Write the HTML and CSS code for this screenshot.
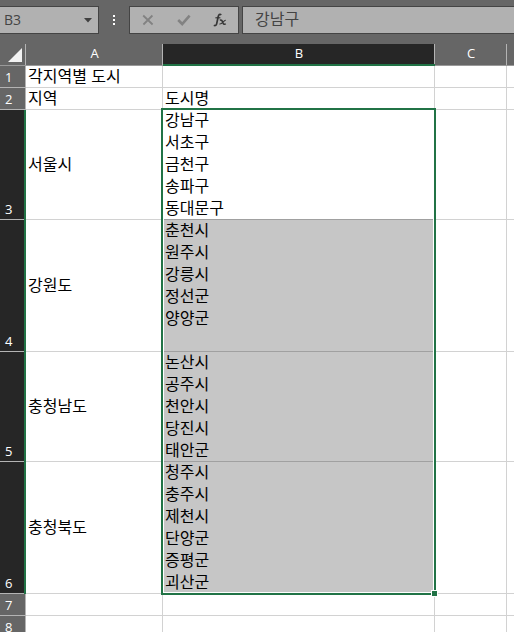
FILE: index.html
```html
<!DOCTYPE html>
<html lang="ko">
<head>
<meta charset="utf-8">
<title>각지역별 도시</title>
<link rel="stylesheet" href="styles.css">
</head>
<body>
<header class="formula-bar">
  <div class="name-box">
    <input class="field" type="text" value="B3" aria-label="이름 상자">
    <button class="tool drop" type="button" aria-label="이름 목록">
      <svg width="8" height="5" viewBox="0 0 8 5"><path d="M0 0h8L4 4.5z" fill="#404040"/></svg>
    </button>
  </div>
  <svg class="grip" width="2" height="10" viewBox="0 0 2 10"><path d="M0 0h2v2H0zM0 4h2v2H0zM0 8h2v2H0z" fill="#fff"/></svg>
  <div class="tools">
    <button class="tool" type="button" aria-label="취소">
      <svg width="12" height="12" viewBox="0 0 12 12"><path d="M1.2 1.5l9.4 9M10.4 1.5L1.4 10.5" fill="none" stroke="#828282" stroke-width="1.8"/></svg>
    </button>
    <button class="tool" type="button" aria-label="입력">
      <svg width="14" height="12" viewBox="0 0 14 12"><path d="M1.2 6l4 4L12.6 1.6" fill="none" stroke="#828282" stroke-width="2.6"/></svg>
    </button>
    <button class="tool" type="button" aria-label="함수 삽입">
      <svg width="14" height="14" viewBox="0 0 14 14" fill="none" stroke="#363636">
        <path d="M8.3 1.8C6.8.6 5.6 1.6 5.1 4L3.7 10.6C3.3 12.4 2.3 13 .8 12.3" stroke-width="1.7"/>
        <path d="M2.4 4.8h5" stroke-width="1.2"/>
        <path d="M6.8 7.2C8.9 6.4 9.2 8 9.7 9.4S10.9 11.8 12.8 10.8" stroke-width="1.5"/>
        <path d="M12.8 7.2C10.6 6.8 9.5 11.7 6.4 11" stroke-width="1.1"/>
      </svg>
    </button>
  </div>
  <input class="field formula" type="text" value="강남구" aria-label="수식 입력줄">
</header>
<main class="sheet">
  <table class="grid">
    <colgroup><col class="col-head"><col class="col-a"><col class="col-b"><col class="col-c"><col></colgroup>
    <thead>
      <tr>
        <th class="corner"><svg width="14" height="14" viewBox="0 0 14 14"><path d="M14 0v14H0z" fill="#f2f2f2"/></svg></th>
        <th scope="col">A</th><th scope="col" class="active">B</th><th scope="col">C</th><th></th>
      </tr>
    </thead>
    <tbody>
      <tr><th scope="row">1</th><td>각지역별 도시</td><td></td><td></td><td></td></tr>
      <tr><th scope="row">2</th><td>지역</td><td>도시명</td><td></td><td></td></tr>
      <tr><th scope="row" class="active">3</th><td>서울시</td><td class="anchor">강남구<br>서초구<br>금천구<br>송파구<br>동대문구<div class="selection"></div></td><td></td><td></td></tr>
      <tr><th scope="row" class="active">4</th><td>강원도</td><td class="selected">춘천시<br>원주시<br>강릉시<br>정선군<br>양양군<br>&nbsp;</td><td></td><td></td></tr>
      <tr><th scope="row" class="active">5</th><td>충청남도</td><td class="selected">논산시<br>공주시<br>천안시<br>당진시<br>태안군</td><td></td><td></td></tr>
      <tr><th scope="row" class="active">6</th><td>충청북도</td><td class="selected">청주시<br>충주시<br>제천시<br>단양군<br>증평군<br>괴산군</td><td></td><td></td></tr>
      <tr><th scope="row">7</th><td></td><td></td><td></td><td></td></tr>
      <tr><th scope="row">8</th><td></td><td></td><td></td><td></td></tr>
    </tbody>
  </table>
</main>
</body>
</html>
```
FILE: styles.css
```css
*,
*::after {
  box-sizing: border-box;
}

body {
  display: flex;
  flex-direction: column;
  height: 100vh;
  margin: 0;
  overflow: hidden;
  background: #666;
  color: #000;
  font: 16px/22px "Liberation Sans", "Noto Sans CJK KR", sans-serif;
}

/* Formula bar */
.formula-bar {
  display: flex;
  flex: none;
  align-items: center;
  padding: 6px 0 10px;
}

.name-box,
.tools,
.formula {
  height: 28px;
  border: 1px solid #444;
  background: #b1b1b1;
}

.name-box {
  display: flex;
  flex: none;
  width: 99px;
  border-left: 0;
}

.field {
  min-width: 0;
  margin: 0;
  padding: 0 4px;
  border: 0;
  border-radius: 0;
  outline: 0;
  background: transparent;
  color: #444;
  font: 14px/22px "Open Sans", "Noto Sans CJK KR", sans-serif;
}

.name-box .field {
  flex: 1;
}

.field.formula {
  flex: 1;
  margin-left: 3px;
  padding: 0 12px 4px;
  border: 1px solid #444;
  border-right: 0;
  background: #b1b1b1;
  font: 16px/22px "Liberation Sans", "Noto Sans CJK KR", sans-serif;
}

.tool {
  display: flex;
  flex: 1;
  align-items: center;
  justify-content: center;
  padding: 0;
  border: 0;
  background: transparent;
}

.tool.drop {
  flex: none;
  width: 20px;
}

.grip {
  flex: none;
  margin: 0 14px;
}

.tools {
  display: flex;
  flex: none;
  width: 110px;
}

/* Sheet */
.sheet {
  flex: 1;
  min-height: 0;
  overflow: hidden;
  background: #fff;
}

.grid {
  width: 100%;
  table-layout: fixed;
  border-spacing: 0;
}

.col-head { width: 26px; }
.col-a { width: 137px; }
.col-b { width: 272px; }
.col-c { width: 72px; }

/* Grid lines are inset shadows, so a row is a whole number of text lines */
th,
td {
  height: 22px;
  padding: 0 2px;
  box-shadow: inset -1px -1px #d2d2d2;
  text-align: left;
  white-space: nowrap;
}

th {
  background: #666;
  box-shadow: inset -1px -1px #b4b4b4;
  color: #fff;
  font: 13px/18px "Open Sans", sans-serif;
}

thead th {
  padding: 0 0 4px;
  box-shadow: inset 0 -1px #999, inset -1px 0 #b4b4b4;
  text-align: center;
}

tbody th {
  padding: 0 0 2px 5px;
  vertical-align: bottom;
}

th.active {
  background: #262626;
}

thead th.active {
  box-shadow: inset 0 -2px #217346, inset -1px 0 #b4b4b4;
}

tbody th.active {
  box-shadow: inset -2px 0 #217346, inset 0 -1px #b4b4b4;
}

/* The last column runs on past the window edge */
thead th:last-child {
  box-shadow: inset 0 -1px #999;
}

td:last-child {
  box-shadow: inset 0 -1px #d2d2d2;
}

thead .corner {
  padding: 0;
}

.corner svg {
  display: block;
  margin: 4px 4px 4px auto;
}

td.selected {
  background: #c6c6c6;
}

td.anchor,
td.selected {
  box-shadow: inset -1px -1px #a0a0a0;
}

td.anchor {
  position: relative;
}

/* Outline around rows 3 to 6 of column B */
.selection {
  position: absolute;
  top: -2px;
  left: -2px;
  width: 275px;
  height: 487px;
  border: 2px solid #217346;
  box-shadow: inset 0 0 0 1px #fff;
}

.selection::after {
  position: absolute;
  right: -4px;
  bottom: -4px;
  width: 7px;
  height: 7px;
  border: 1px solid #fff;
  background: #217346;
  content: "";
}
```
